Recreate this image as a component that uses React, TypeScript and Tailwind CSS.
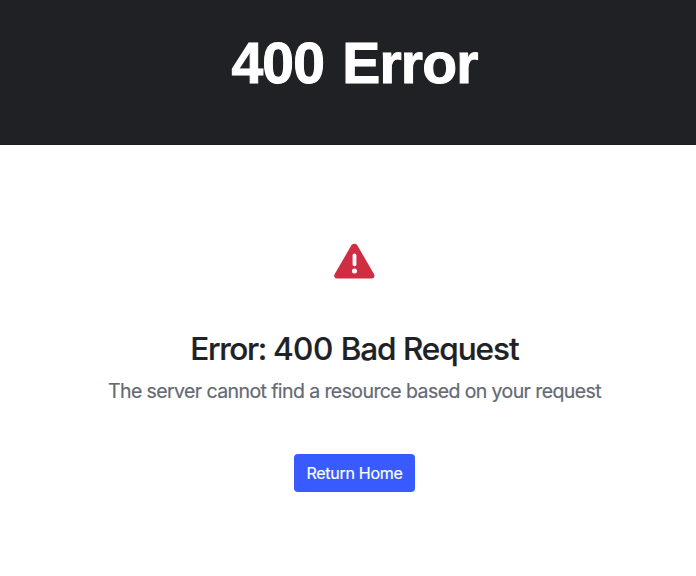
export default function App() {
  return (
    <div className="flex h-[576px] w-full flex-col overflow-hidden bg-white font-['Inter',sans-serif]">
      <header className="h-[145px] border-b border-[#1c1b20] bg-[#202124] pt-[27px] pl-[13px] text-center">
        <h1 className="font-['Liberation_Sans',sans-serif] text-[57px] leading-[72px] font-bold tracking-[-0.8px] text-white [word-spacing:3px] [-webkit-text-stroke:1px_white]">400 Error</h1>
      </header>
      <main className="flex flex-col items-center pl-[13px]">
        <svg className="mt-[96px] h-[40px] w-[41px]" viewBox="0 0 41 40">
          <path d="M17.3 4.5c1.4-2.4 4.7-2.4 6.1 0l16.7 28.7c1.1 1.9-.2 4.3-2.4 4.3H3c-2.2 0-3.5-2.4-2.4-4.3z" fill="#d02d43" />
          <path d="M20.5 14.3v9" stroke="white" strokeWidth="3.8" strokeLinecap="round" />
          <circle cx="20.5" cy="29.9" r="2.5" fill="white" />
        </svg>
        <h2 className="mt-[48px] text-[31.5px] leading-[40px] font-medium tracking-[-1.05px] whitespace-nowrap text-[#202124] [-webkit-text-stroke:0.2px_#202124]">
          <span className="tracking-[-1.4px]">Error: </span>
          <span className="tracking-[-0.5px]">400 </span>
          Bad Request
        </h2>
        <p className="mt-[7px] text-[19.5px] leading-[30px] tracking-[-0.59px] whitespace-nowrap text-[#646973] [-webkit-text-stroke:0.2px_#646973]">The server cannot find a resource based on your request</p>
        <button className="mt-[48px] h-[38px] w-[121px] rounded-[4px] bg-[#385aff] text-[16px] tracking-[-0.3px] whitespace-nowrap text-white [-webkit-text-stroke:0.2px_white]">Return Home</button>
      </main>
    </div>
  );
}
